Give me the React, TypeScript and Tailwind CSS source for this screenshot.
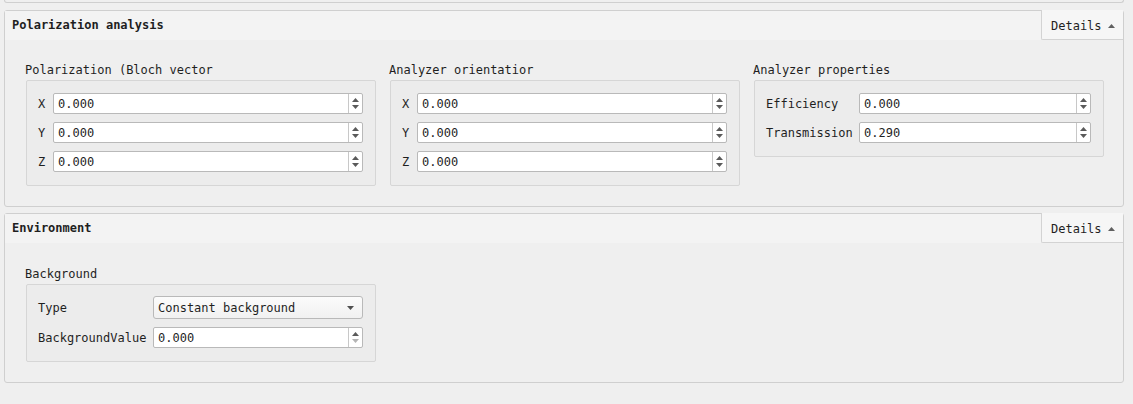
import React from "react";

const UpTri = ({ c = "#5a5a5a" }: { c?: string }) => (
  <svg width="7" height="4" viewBox="0 0 7 4"><path d="M0 4 L3.5 0 L7 4 Z" fill={c} /></svg>
);
const DownTri = ({ c = "#5a5a5a" }: { c?: string }) => (
  <svg width="7" height="4" viewBox="0 0 7 4"><path d="M0 0 L3.5 4 L7 0 Z" fill={c} /></svg>
);

function Spin({ value, downDisabled = false }: { value: string; downDisabled?: boolean }) {
  return (
    <div className="flex h-[21px] bg-white border border-[#b9b9b9] rounded-[2px]">
      <div className="flex-1 pl-[4px] leading-[20px]">{value}</div>
      <div className="w-[14px] border-l border-[#c8c8c8] flex flex-col items-center justify-center gap-[3px]">
        <UpTri />
        <DownTri c={downDisabled ? "#b4b4b4" : "#5a5a5a"} />
      </div>
    </div>
  );
}

function Group({ title, children }: { title: string; children: React.ReactNode }) {
  return (
    <div className="flex flex-col">
      <div className="h-[16px] leading-[16px] -ml-[1px] mb-[2px]">{title}</div>
      <div className="border border-[#d6d6d6] rounded-[2px] bg-[#ececec] pt-[12px] pb-[13px] pl-[11px] pr-[12px]">
        {children}
      </div>
    </div>
  );
}

function Panel({ title, children }: { title: string; children: React.ReactNode }) {
  return (
    <div className="border border-[#cfcfcf] rounded-[3px] bg-[#efefef]">
      <div className="h-[29px] bg-[#f3f3f3] flex items-start">
        <div className="flex-1 pl-[7px] h-[29px] leading-[29px] font-bold">{title}</div>
        <div className="-mt-[1px] h-[30px] w-[82px] border-l border-b border-[#d3d3d3] bg-[#f6f6f6] rounded-bl-[2px] flex items-center pl-[9px] pt-[2px] gap-[6px]">
          <span>Details</span>
          <UpTri c="#606060" />
        </div>
      </div>
      {children}
    </div>
  );
}

export default function App() {
  return (
    <div
      className="w-[1133px] h-[404px] bg-[#efefef] text-[12px] text-[#1f1f1f] overflow-hidden"
      style={{ fontFamily: "'DejaVu Sans Mono', monospace" }}
    >
      <div className="pl-[4px] pr-[9px]">
        <div className="h-[3px] border-l border-r border-b border-[#cfcfcf] rounded-b-[3px]" />
        <div className="h-[7px]" />
        <Panel title="Polarization analysis">
          <div className="pt-[22px] pb-[20px] pl-[21px] flex gap-[14px]">
            <div className="w-[350px]">
              <Group title="Polarization (Bloch vector">
                <div className="grid grid-cols-[9px_1fr] gap-x-[6px] gap-y-[8px] items-center">
                  <span>X</span><Spin value="0.000" />
                  <span>Y</span><Spin value="0.000" />
                  <span>Z</span><Spin value="0.000" />
                </div>
              </Group>
            </div>
            <div className="w-[350px]">
              <Group title="Analyzer orientatior">
                <div className="grid grid-cols-[9px_1fr] gap-x-[6px] gap-y-[8px] items-center">
                  <span>X</span><Spin value="0.000" />
                  <span>Y</span><Spin value="0.000" />
                  <span>Z</span><Spin value="0.000" />
                </div>
              </Group>
            </div>
            <div className="w-[350px]">
              <Group title="Analyzer properties">
                <div className="grid grid-cols-[87px_1fr] gap-x-[6px] gap-y-[8px] items-center">
                  <span>Efficiency</span><Spin value="0.000" />
                  <span>Transmission</span><Spin value="0.290" />
                </div>
              </Group>
            </div>
          </div>
        </Panel>
        <div className="h-[6px]" />
        <Panel title="Environment">
          <div className="pt-[23px] pb-[20px] pl-[21px] flex">
            <div className="w-[350px]">
              <div className="flex flex-col">
                <div className="h-[16px] leading-[16px] -ml-[1px] mb-[2px]">Background</div>
                <div className="border border-[#d6d6d6] rounded-[2px] bg-[#ececec] pt-[11px] pb-[13px] pl-[11px] pr-[12px]">
                  <div className="grid grid-cols-[108px_1fr] gap-x-[7px] gap-y-[8px] items-center">
                    <span>Type</span>
                    <div className="h-[23px] border border-[#b9b9b9] rounded-[3px] bg-gradient-to-b from-[#fbfbfb] to-[#f1f1f1] flex items-center pl-[4px] pr-[8px]">
                      <span className="flex-1">Constant background</span>
                      <DownTri c="#505050" />
                    </div>
                    <span>BackgroundValue</span>
                    <Spin value="0.000" downDisabled />
                  </div>
                </div>
              </div>
            </div>
          </div>
        </Panel>
      </div>
    </div>
  );
}
